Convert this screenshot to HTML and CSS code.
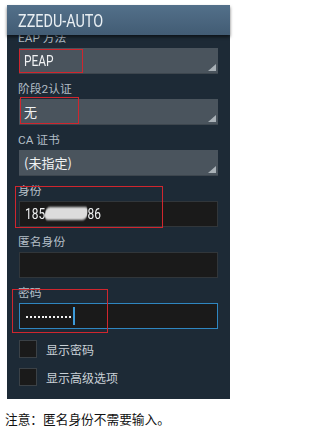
FILE: index.html
```html
<!DOCTYPE html>
<html lang="zh">
<head>
<meta charset="utf-8">
<title>ZZEDU-AUTO</title>
<link rel="stylesheet" href="styles.css">
</head>
<body>
<div class="page">
  <div class="panel">
    <div class="titlebar"><span class="sq title-text">ZZEDU-AUTO</span></div>
    <div class="content">
      <div class="fields">
        <div class="field">
          <div class="label">EAP 方法</div>
          <div class="select"><span class="sq latin">PEAP</span></div>
        </div>
        <div class="field">
          <div class="label">阶段2认证</div>
          <div class="select"><span class="cjk">无</span></div>
        </div>
        <div class="field">
          <div class="label">CA 证书</div>
          <div class="select"><span class="cjk">(未指定)</span></div>
        </div>
        <div class="field">
          <div class="label">身份</div>
          <div class="input"><span class="sq latin">185<span class="blob"></span>86</span></div>
        </div>
        <div class="field">
          <div class="label">匿名身份</div>
          <div class="input"></div>
        </div>
        <div class="field">
          <div class="label">密码</div>
          <div class="input input-focus">
            <span class="dots"><i></i><i></i><i></i><i></i><i></i><i></i><i></i><i></i><i></i><i></i><i></i><i></i></span>
            <span class="cursor"></span>
          </div>
        </div>
      </div>
      <div class="checks">
        <div class="check-row"><span class="box"></span><span class="check-label">显示密码</span></div>
        <div class="check-row"><span class="box"></span><span class="check-label">显示高级选项</span></div>
      </div>
    </div>
  </div>
  <p class="note">注意：匿名身份不需要输入。</p>

  <div class="mark mark-1"></div>
  <div class="mark mark-2"></div>
  <div class="mark mark-3"></div>
  <div class="mark mark-4"></div>
</div>
</body>
</html>
```

FILE: styles.css
```css
html, body {
  margin: 0;
  padding: 0;
  background: #ffffff;
}

.page {
  position: relative;
  width: 235px;
  height: 444px;
  overflow: hidden;
  font-family: Roboto, "Noto Sans CJK SC", sans-serif;
}

.panel {
  margin: 5px 0 0 7px;
  width: 223px;
  background: #1d2a36;
}

.titlebar {
  position: relative;
  height: 28px;
  padding: 2px 0 0 11px;
  line-height: 27px;
  background: linear-gradient(#53708a, #425c74);
  box-shadow: 0 2px 3px rgba(0, 0, 0, 0.55);
}

.sq {
  display: inline-block;
  transform-origin: 0 50%;
  white-space: nowrap;
}

.title-text {
  font-family: Roboto, sans-serif;
  font-size: 18px;
  color: #e9eff3;
  transform: scaleX(0.8);
}

.content {
  overflow: hidden;
  padding: 0 12px 8px 12px;
}

.fields {
  display: flex;
  flex-direction: column;
  gap: 8px;
}

.field:first-child {
  margin-top: -4px;
}

.label {
  font-family: Roboto, "Noto Sans CJK SC", sans-serif;
  font-size: 11.8px;
  line-height: 14px;
  color: #b3bec6;
  margin: 0 0 3px -1px;
  white-space: nowrap;
}

.select {
  position: relative;
  height: 25px;
  border-bottom: 1px solid #3d464e;
  background: #4a545d;
  padding-left: 5px;
  display: flex;
  align-items: center;
}

.select::after {
  content: "";
  position: absolute;
  right: 2px;
  bottom: 2px;
  width: 8px;
  height: 7px;
  background: #a9b1b7;
  clip-path: polygon(100% 0, 100% 100%, 0 100%);
}

.latin {
  font-family: Roboto, sans-serif;
  font-size: 15.5px;
  color: #f1f3f4;
  transform: scaleX(0.77);
}

.cjk {
  font-family: "Noto Sans CJK SC", sans-serif;
  font-size: 13px;
  color: #f1f3f4;
  line-height: 16px;
}

.input {
  height: 24px;
  border: 1px solid #31363a;
  background: #1a1a1a;
  padding-left: 5px;
  display: flex;
  align-items: center;
}

.blob {
  display: inline-block;
  width: 55px;
  height: 13px;
  vertical-align: -1px;
  background: #dcdcdc;
  border-radius: 7px 3px 7px 4px;
  filter: blur(0.8px);
}

.input-focus {
  border-color: #2f86c0;
}

.dots {
  display: flex;
  gap: 1.9px;
  margin-left: 1px;
  margin-top: 2px;
}

.dots i {
  display: block;
  width: 2px;
  height: 2px;
  background: #f4f4f4;
}

.cursor {
  width: 2px;
  height: 18px;
  margin-left: 2px;
  background: #3d9ad8;
}

.checks {
  margin-top: 6px;
}

.check-row {
  height: 28px;
  display: flex;
  align-items: center;
  gap: 9px;
}

.box {
  width: 16px;
  height: 16px;
  border: 1px solid #3b4146;
  background: #1a1a1a;
}

.check-label {
  font-family: "Noto Sans CJK SC", sans-serif;
  font-size: 12px;
  color: #c9d1d7;
}

.note {
  margin: 12px 0 0 5px;
  font-family: "Noto Sans CJK SC", sans-serif;
  font-size: 12.7px;
  line-height: 16px;
  color: #111111;
}

.mark {
  position: absolute;
  border: 1px solid #d0262e;
  box-sizing: border-box;
}

.mark-1 { left: 19px; top: 49px; width: 64px; height: 24px; }
.mark-2 { left: 20px; top: 97px; width: 59px; height: 27px; }
.mark-3 { left: 15px; top: 186px; width: 148px; height: 42px; }
.mark-4 { left: 12px; top: 289px; width: 96px; height: 44px; }
```
